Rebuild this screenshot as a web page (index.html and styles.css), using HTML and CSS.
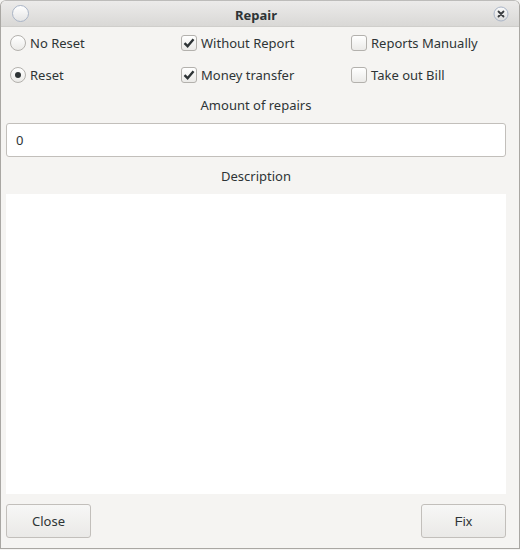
FILE: index.html
```html
<!DOCTYPE html>
<html>
<head>
<meta charset="utf-8">
<link rel="stylesheet" href="styles.css">
</head>
<body>
<div class="window">
  <div class="titlebar">
    <span class="menu-dot"></span>
    <span class="title">Repair</span>
    <span class="close-btn">
      <svg width="16" height="16" viewBox="0 0 16 16">
        <circle cx="8" cy="8" r="7" fill="url(#g)" stroke="#a9b4c6" stroke-width="1"/>
        <defs><linearGradient id="g" x1="0" y1="0" x2="0" y2="1"><stop offset="0" stop-color="#fbfbfb"/><stop offset="1" stop-color="#dcdcdc"/></linearGradient></defs>
        <path d="M5.5 5.5 L10.5 10.5 M10.5 5.5 L5.5 10.5" stroke="#3a3d40" stroke-width="1.8" stroke-linecap="round"/>
      </svg>
    </span>
  </div>
  <div class="content">
    <div class="options">
      <label class="opt"><span class="radio"></span>No Reset</label>
      <label class="opt"><span class="check on"><svg width="14" height="14" viewBox="0 0 14 14"><path d="M2.5 7.2 L5.6 10.2 L11.5 3.2" fill="none" stroke="#2e3436" stroke-width="2.4"/></svg></span>Without Report</label>
      <label class="opt"><span class="check"></span>Reports Manually</label>
      <label class="opt"><span class="radio sel"></span>Reset</label>
      <label class="opt"><span class="check on"><svg width="14" height="14" viewBox="0 0 14 14"><path d="M2.5 7.2 L5.6 10.2 L11.5 3.2" fill="none" stroke="#2e3436" stroke-width="2.4"/></svg></span>Money transfer</label>
      <label class="opt"><span class="check"></span>Take out Bill</label>
    </div>
    <div class="label first">Amount of repairs</div>
    <div class="entry">0</div>
    <div class="label second">Description</div>
    <div class="textarea"></div>
    <div class="buttons">
      <button class="btn">Close</button>
      <button class="btn fix">Fix</button>
    </div>
  </div>
</div>
</body>
</html>
```
FILE: styles.css
```css
html, body {
  margin: 0;
  padding: 0;
  background: #f5f4f2;
}
.window {
  box-sizing: border-box;
  width: 520px;
  height: 549px;
  border: 1px solid #a9a7a3;
  border-top-color: #bdbcba;
  border-radius: 6px 6px 0 0;
  background: #f5f4f2;
  font-family: "Noto Sans", "Open Sans", sans-serif;
  font-size: 13px;
  color: #2e3436;
  overflow: hidden;
}
.titlebar {
  height: 25px;
  border-bottom: 1px solid #cfcecb;
  background: linear-gradient(#ecebea, #d9d8d6);
  display: flex;
  align-items: center;
  position: relative;
}
.menu-dot {
  width: 15px;
  height: 15px;
  margin-left: 11px;
  margin-top: -1px;
  border-radius: 50%;
  border: 1px solid #a9b4c6;
  background: linear-gradient(#ffffff, #e4e4e4);
}
.title {
  flex: 1;
  text-align: center;
  font-weight: bold;
  color: #2e3436;
  margin-left: -10px;
  margin-top: 3px;
}
.close-btn {
  width: 16px;
  height: 16px;
  margin-right: 10px;
  margin-top: 1px;
}
.content {
  padding: 0 13px 0 5px;
}
.options {
  display: grid;
  grid-template-columns: 171px 170px 1fr;
  grid-auto-rows: 32px;
  padding-left: 4px;
}
.opt {
  display: flex;
  align-items: center;
  gap: 4px;
  white-space: nowrap;
}
.radio {
  box-sizing: border-box;
  width: 16px;
  height: 16px;
  border-radius: 50%;
  border: 1px solid #b3b1ad;
  background: linear-gradient(#ffffff, #ebeae8);
  display: flex;
  align-items: center;
  justify-content: center;
}
.radio.sel::after {
  content: "";
  width: 6px;
  height: 6px;
  border-radius: 50%;
  background: #2e3436;
}
.check {
  box-sizing: border-box;
  width: 16px;
  height: 16px;
  border-radius: 3px;
  border: 1px solid #b3b1ad;
  background: linear-gradient(#ffffff, #ebeae8);
  display: flex;
  align-items: center;
  justify-content: center;
}
.label {
  text-align: center;
  height: 20px;
  line-height: 20px;
}
.label.first { margin-top: 4px; }
.label.second { margin-top: 9px; }
.entry {
  box-sizing: border-box;
  margin-top: 8px;
  height: 34px;
  border: 1px solid #c2bfbb;
  border-radius: 3px;
  background: #ffffff;
  padding-left: 9px;
  line-height: 32px;
}
.textarea {
  margin-top: 8px;
  height: 300px;
  background: #ffffff;
}
.buttons {
  margin-top: 10px;
  display: flex;
  justify-content: space-between;
}
.btn {
  box-sizing: border-box;
  width: 85px;
  height: 34px;
  border: 1px solid #c2bfbb;
  border-radius: 3px;
  background: linear-gradient(#f7f7f6, #eae9e7);
  font-family: "Noto Sans", "Open Sans", sans-serif;
  font-size: 13px;
  color: #2e3436;
  padding: 0;
}
.btn.fix {
  font-family: "Liberation Sans", Arial, sans-serif;
}
```
